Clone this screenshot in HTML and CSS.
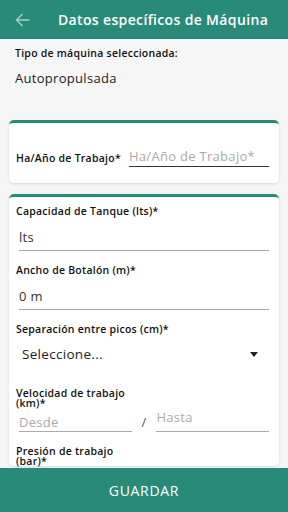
FILE: index.html
```html
<!DOCTYPE html>
<html lang="es">
<head>
    <meta charset="UTF-8">
    <meta name="viewport" content="width=device-width, initial-scale=1.0">
    <title>Datos específicos de Máquina</title>
    <link rel="stylesheet" href="styles.css">
</head>
<body>
    <header class="toolbar">
        <svg class="back" width="15" height="14" viewBox="0 0 15 14">
            <path d="M14.5 7H1.5M7.5 1L1.5 7l6 6" fill="none" stroke="#a6cec5" stroke-width="1.5"/>
        </svg>
        <h1>Datos específicos de Máquina</h1>
    </header>

    <main class="content">
        <div class="machine">
            <div class="machine-label">Tipo de máquina seleccionada:</div>
            <div class="machine-value">Autopropulsada</div>
        </div>

        <div class="card card-row">
            <label class="field-label" for="ha">Ha/Año de Trabajo*</label>
            <input id="ha" class="field inline" placeholder="Ha/Año de Trabajo*">
        </div>

        <div class="card">
            <div class="group">
                <label class="field-label" for="tanque">Capacidad de Tanque (lts)*</label>
                <input id="tanque" class="field" value="lts">
            </div>
            <div class="group">
                <label class="field-label" for="botalon">Ancho de Botalón (m)*</label>
                <input id="botalon" class="field" value="0 m">
            </div>
            <div class="group select-group">
                <label class="field-label">Separación entre picos (cm)*</label>
                <div class="select">
                    <span>Seleccione...</span>
                    <span class="caret"></span>
                </div>
            </div>
            <div class="group range-group">
                <label class="field-label narrow">Velocidad de trabajo (km)*</label>
                <div class="range">
                    <input class="field low" placeholder="Desde">
                    <span class="slash">/</span>
                    <input class="field high" placeholder="Hasta">
                </div>
            </div>
            <div class="group">
                <label class="field-label narrow">Presión de trabajo (bar)*</label>
            </div>
        </div>
    </main>

    <button class="save">GUARDAR</button>
</body>
</html>
```

FILE: styles.css
```css
* {
    box-sizing: border-box;
}
body {
    margin: 0;
    font-family: "Open Sans", Arial, sans-serif;
    background: #f6f6f6;
    color: #222;
    height: 512px;
    overflow: hidden;
}
.toolbar {
    height: 39px;
    background: #2a8a78;
    display: flex;
    align-items: center;
    padding-left: 15px;
}
.toolbar h1 {
    margin: 0 0 0 28px;
    color: #fff;
    font-size: 14px;
    font-weight: 600;
    letter-spacing: 0.35px;
    white-space: nowrap;
}
.back {
    flex: none;
}
.machine {
    padding: 7.5px 15px 0;
    height: 81px;
}
.machine-label {
    font-size: 10.5px;
    line-height: 13px;
    font-weight: 600;
    letter-spacing: 0.25px;
    color: #111;
}
.machine-value {
    margin-top: 10.5px;
    font-size: 13px;
    line-height: 16px;
    letter-spacing: 0.3px;
}
.card {
    background: #fff;
    margin: 0 9px 11px;
    border-top: 3px solid #2a8a78;
    border-radius: 5px;
    box-shadow: 0 1px 3px rgba(0, 0, 0, 0.12);
    padding: 8px 10px 0 7px;
}
.card-row {
    display: flex;
    align-items: flex-end;
    height: 63px;
    padding-bottom: 16px;
}
.field-label {
    display: block;
    font-size: 10.5px;
    line-height: 12px;
    font-weight: 600;
    letter-spacing: 0.25px;
    color: #111;
    white-space: nowrap;
}
.card-row .field-label {
    margin-right: 8px;
    padding-bottom: 3px;
}
.field {
    display: block;
    width: 100%;
    border: none;
    border-bottom: 1.5px solid #aaa;
    background: transparent;
    font-family: inherit;
    font-size: 13px;
    line-height: 16px;
    letter-spacing: 0.3px;
    color: #333;
    padding: 7px 0 5px;
    outline: none;
}
.field.inline {
    flex: 1;
    width: auto;
    min-width: 0;
    border-bottom-color: #333;
    padding: 0 0 2px;
}
.field::placeholder {
    color: #aaa;
}
.group {
    margin-bottom: 13px;
}
.group .field {
    margin-top: 5px;
    margin-left: 3px;
    width: calc(100% - 3px);
}
.narrow {
    width: 118px;
    white-space: normal;
    line-height: 10px;
}
.select {
    display: flex;
    justify-content: space-between;
    align-items: center;
    font-size: 13.5px;
    line-height: 16px;
    letter-spacing: 0.3px;
    padding: 11px 11px 6px 6px;
}
.select-group {
    margin-bottom: 20px;
}
.caret {
    width: 0;
    height: 0;
    border-left: 4.5px solid transparent;
    border-right: 4.5px solid transparent;
    border-top: 5px solid #222;
}
.range {
    display: flex;
    align-items: flex-end;
    margin-left: 3px;
}
.range .field {
    flex: 1;
    min-width: 0;
    margin: 0;
    width: auto;
}
.range .low {
    padding: 6px 0 1px;
}
.range .high {
    padding: 1px 0 6px;
}
.range-group {
    margin-bottom: 13.5px;
}
.slash {
    margin: 0 10px 1px;
    font-size: 13px;
    color: #555;
}
.save {
    position: fixed;
    left: 0;
    right: 0;
    bottom: 0;
    height: 44px;
    border: none;
    background: #2a8a78;
    color: #fff;
    font-family: inherit;
    font-size: 14px;
    letter-spacing: 0.7px;
}
```
